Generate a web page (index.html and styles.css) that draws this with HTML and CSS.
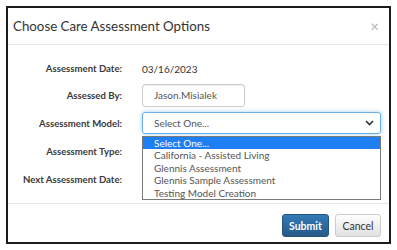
FILE: index.html
```html
<!DOCTYPE html>
<html lang="en">
<head>
    <meta charset="UTF-8">
    <title>Choose Care Assessment Options</title>
    <link rel="stylesheet" href="styles.css">
</head>
<body>
    <div class="modal">
        <div class="modal-header">
            <h4 class="modal-title">Choose Care Assessment Options</h4>
            <span class="close">&times;</span>
        </div>
        <div class="modal-body">
            <div class="form-row">
                <label>Assessment Date:</label>
                <div class="value">03/16/2023</div>
            </div>
            <div class="form-row">
                <label>Assessed By:</label>
                <div class="text-box">Jason.Misialek</div>
            </div>
            <div class="form-row">
                <label>Assessment Model:</label>
                <div class="select-wrap">
                    <div class="select-box">
                        <span>Select One...</span>
                        <svg class="chevron" width="9" height="6" viewBox="0 0 9 6">
                            <path d="M1 1 L4.5 4.5 L8 1" fill="none" stroke="#333" stroke-width="1.6"/>
                        </svg>
                    </div>
                    <ul class="options">
                        <li class="selected">Select One...</li>
                        <li>California - Assisted Living</li>
                        <li>Glennis Assessment</li>
                        <li>Glennis Sample Assessment</li>
                        <li>Testing Model Creation</li>
                    </ul>
                </div>
            </div>
            <div class="form-row">
                <label>Assessment Type:</label>
                <div class="value"></div>
            </div>
            <div class="form-row">
                <label>Next Assessment Date:</label>
                <div class="value"></div>
            </div>
        </div>
        <div class="modal-footer">
            <button class="btn btn-primary">Submit</button>
            <button class="btn btn-default">Cancel</button>
        </div>
    </div>
</body>
</html>
```

FILE: styles.css
```css
body {
    margin: 0;
    background: #ffffff;
    font-family: 'Lato', 'Liberation Sans', sans-serif;
    color: #333333;
}
.modal {
    margin: 6px;
    width: 381px;
    height: 234px;
    border: 2px solid #1c1c1c;
    display: flex;
    flex-direction: column;
}
.modal-header {
    height: 36px;
    border-bottom: 1px solid #e5e5e5;
    display: flex;
    align-items: center;
    justify-content: space-between;
    padding: 0 10px 0 5px;
}
.modal-title {
    margin: 0;
    font-size: 13.3px;
    font-weight: normal;
    color: #333333;
}
.close {
    font-size: 15px;
    color: #b5b5b5;
}
.modal-body {
    padding: 10px 0;
    height: 138px;
    display: grid;
    grid-template-rows: 27px 27px 28px 28px 28px;
}
.form-row {
    display: grid;
    grid-template-columns: 114px 1fr;
    column-gap: 20px;
    align-items: center;
    font-size: 10px;
}
.form-row label {
    text-align: right;
    font-weight: bold;
    font-size: 9.6px;
    color: #3a3a3a;
}
.text-box {
    width: 90px;
    height: 21px;
    line-height: 21px;
    padding-left: 11px;
    border: 1px solid #cccccc;
    border-radius: 3px;
    box-shadow: inset 0 1px 1px rgba(0, 0, 0, 0.075);
    color: #555555;
}
.select-wrap {
    position: relative;
    width: 239px;
}
.select-box {
    height: 20px;
    padding: 0 6px 0 11px;
    border: 1px solid #66afe9;
    border-radius: 3px;
    box-shadow: 0 0 4px rgba(102, 175, 233, 0.6);
    display: flex;
    align-items: center;
    justify-content: space-between;
    color: #555555;
}
.options {
    position: absolute;
    top: 24px;
    left: 0;
    width: 237px;
    margin: 0;
    padding: 0;
    list-style: none;
    border: 1px solid #7a7a7a;
    background: #ffffff;
    color: #555555;
    font-size: 10px;
}
.options li {
    height: 12.4px;
    line-height: 12.4px;
    padding-left: 11px;
}
.options li.selected {
    background: #1e7ff2;
    color: #ffffff;
}
.modal-footer {
    border-top: 1px solid #e5e5e5;
    padding: 10px 8px 0 0;
    display: flex;
    justify-content: flex-end;
    gap: 6px;
}
.btn {
    height: 23px;
    border-radius: 3px;
    font-family: 'Lato', 'Liberation Sans', sans-serif;
    font-size: 10.5px;
    padding: 0;
}
.btn-primary {
    width: 47px;
    border: 1px solid #245580;
    background: linear-gradient(#337ab7, #265a88);
    color: #ffffff;
    font-weight: bold;
}
.btn-default {
    width: 46px;
    border: 1px solid #cccccc;
    background: linear-gradient(#ffffff, #e0e0e0);
    color: #333333;
}
```
